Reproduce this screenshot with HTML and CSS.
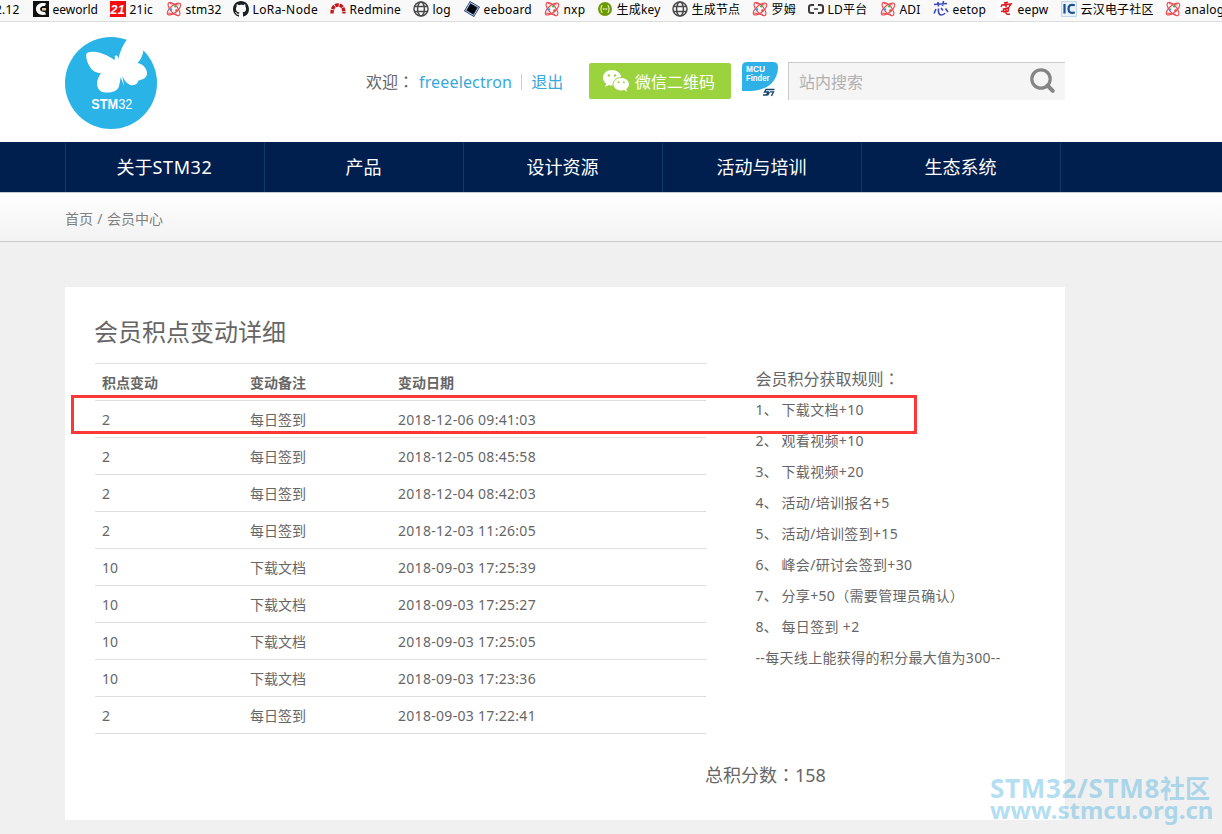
FILE: index.html
```html
<!DOCTYPE html>
<html lang="zh-CN">

<head>
    <meta charset="utf-8">
    <title>会员中心</title>
    <link rel="stylesheet" href="styles.css">
</head>

<body>
    <!-- shared icons -->
    <svg class="defs" width="0" height="0">
        <symbol id="atom" viewBox="0 0 16 16">
            <g fill="none" stroke="#ea4f56" stroke-width="1.2">
                <ellipse cx="8" cy="8" rx="8.200" ry="3.600" transform="rotate(50 8 8)" />
                <ellipse cx="8" cy="8" rx="8.200" ry="3.600" transform="rotate(-40 8 8)" />
                <path d="M4 2.500L12.500 4M2 12L11 13.500" />
            </g>
            <circle cx="5" cy="8.500" r="1.300" fill="#3d9be0" />
            <circle cx="9.300" cy="5.300" r="1.200" fill="#4eb14e" />
            <circle cx="10.500" cy="9.500" r="1.300" fill="#e8454c" />
        </symbol>
        <symbol id="globe" viewBox="0 0 16 16">
            <g fill="none" stroke="#4a4a4a" stroke-width="1.500">
                <circle cx="8" cy="8" r="7" />
                <ellipse cx="8" cy="8" rx="3.400" ry="7" />
                <path d="M1.500 5.500h13M1.500 10.500h13" />
            </g>
        </symbol>
    </svg>

    <div class="bookmarks">
        <span class="bm bm-cut">2.12</span>
        <span class="bm bm-eeworld"><svg viewBox="0 0 16 16"><path d="M0 0h16v16H0z" fill="#111" /><path d="M13 2.500C7 1 3 4 3 8s4 7 10 5.500L12 11c-3 0-5-1-5-3s2-3.500 5-3z" fill="#fff" /><path d="M9 7h4v2.500H9z" fill="#e8c89a" /></svg>eeworld</span>
        <span class="bm bm-21ic"><svg viewBox="0 0 16 16"><path d="M0 0h16v16H0z" fill="#f80b0b" /><text class="ico-21" x="0.500" y="12.500">21</text></svg>21ic</span>
        <span class="bm bm-stm32"><svg><use href="#atom" /></svg>stm32</span>
        <span class="bm bm-lora"><svg viewBox="0 0 16 16"><path fill="#1b1f23" d="M8 0C3.580 0 0 3.580 0 8c0 3.540 2.290 6.530 5.470 7.590.4.070.55-.17.55-.38 0-.19-.01-.82-.01-1.490-2.010.37-2.530-.49-2.690-.94-.09-.23-.48-.94-.82-1.130-.28-.15-.68-.52-.01-.53.63-.01 1.080.58 1.230.82.72 1.210 1.870.87 2.330.66.07-.52.28-.87.51-1.070-1.780-.2-3.640-.89-3.640-3.950 0-.87.31-1.590.82-2.150-.08-.2-.36-1.020.08-2.120 0 0 .67-.21 2.200.82.64-.18 1.320-.27 2-.27s1.360.09 2 .27c1.530-1.040 2.200-.82 2.200-.82.44 1.100.16 1.920.08 2.120.51.56.82 1.270.82 2.150 0 3.070-1.870 3.750-3.650 3.950.29.25.54.73.54 1.480 0 1.070-.01 1.930-.01 2.200 0 .21.15.46.55.38A8.010 8.010 0 0 0 16 8c0-4.420-3.580-8-8-8z" /></svg>LoRa-Node</span>
        <span class="bm bm-redmine"><svg viewBox="0 0 16 16"><path d="M2 12.500C2 6.500 4.500 4 8 4s6 2.500 6 8.500" fill="none" stroke="#c0181c" stroke-width="3.400" stroke-dasharray="3.600 .8" /></svg>Redmine</span>
        <span class="bm bm-log"><svg><use href="#globe" /></svg>log</span>
        <span class="bm bm-eeboard"><svg viewBox="0 0 16 16"><path d="M6 0L16 6L10 16L0 10Z" fill="#14325f" /><path d="M6.300 1.600L14.400 6.400L9.700 14.400L1.600 9.600Z" fill="none" stroke="#c8d8ee" /><path d="M6.800 3.300L12.800 6.800L9.300 12.700L3.300 9.200Z" fill="#000" /></svg>eeboard</span>
        <span class="bm bm-nxp"><svg><use href="#atom" /></svg>nxp</span>
        <span class="bm bm-key"><svg viewBox="0 0 16 16"><circle cx="8" cy="8" r="7" fill="#6d9a00" /><path d="M5.500 4.500Q4.300 4.500 4.300 6Q4.300 8 3.300 8Q4.300 8 4.300 10Q4.300 11.500 5.500 11.500M10.500 4.500Q11.700 4.500 11.700 6Q11.700 8 12.700 8Q11.700 8 11.700 10Q11.700 11.500 10.500 11.500" fill="none" stroke="#e4efc6" stroke-width="1.200" /><path d="M5.800 8h4.400" stroke="#e4efc6" stroke-width="1.300" stroke-dasharray="1.200 .4" /></svg>生成key</span>
        <span class="bm bm-node"><svg><use href="#globe" /></svg>生成节点</span>
        <span class="bm bm-rohm"><svg><use href="#atom" /></svg>罗姆</span>
        <span class="bm bm-ld"><svg viewBox="0 0 16 16"><path d="M6 4H3.500Q1 4 1 6v4Q1 12 3.500 12H6M10 4h2.500Q15 4 15 6v4Q15 12 12.500 12H10" fill="none" stroke="#3c3c3c" stroke-width="2" /><path d="M6 8h4" stroke="#3c3c3c" stroke-width="1.500" /></svg>LD平台</span>
        <span class="bm bm-adi"><svg><use href="#atom" /></svg>ADI</span>
        <span class="bm bm-eetop"><svg viewBox="0 0 16 16"><path d="M1 3.500l13-1M5 1l.5 4.500M10.500 0L9.500 5M3 8L1 12.500M5.500 7.500Q5 14 8 14t4-2M8 7l2 2.500M12.500 7.500l2.500 3.500" fill="none" stroke="#3949b8" stroke-width="1.600" /></svg>eetop</span>
        <span class="bm bm-eepw"><svg viewBox="0 0 16 16"><path d="M0 0h16v16H0z" fill="#fff" /><path d="M6 2l4-.8M3 6L4 4l9-1-2 3M8 1.500V6M5.500 8l5-1.200-.5 3.500-4 .7zM3 10.500l3-.5M8 7v4.500q0 2.500 4 1.500" fill="none" stroke="#e5161c" stroke-width="1.500" /></svg>eepw</span>
        <span class="bm bm-ic"><svg viewBox="0 0 16 16"><path d="M.5.5h15v15H.5z" fill="#e9f1f8" stroke="#c5d5e3" /><path d="M3.500 3v9.500M13.800 4.300Q7.500 2.500 7.500 7.800T13.800 11.500" fill="none" stroke="#164f92" stroke-width="2.200" /></svg>云汉电子社区</span>
        <span class="bm bm-analog"><svg><use href="#atom" /></svg>analog</span>
    </div>

    <div class="header">
        <div class="container header-inner">
            <svg class="logo" viewBox="45 21 276 276">
                <circle cx="183" cy="159" r="138" fill="#29b3e6" />
                <path fill="#fff" d="M109 72C112 64 135 62 158 71C174 77 186 84 193 90L195 84L194 78L199 76L204 80L205 90C207 76 214 52 230 30L238 18H292L280 62C277 80 271 90 262 99C280 101 292 117 291 132C290 145 275 150 266 151C262 166 248 168 239 164C227 158 221 147 217 138L222 168L212 142C210 153 209 163 206 172C199 188 175 190 157 186C143 181 137 163 144 146C146 140 150 134 153 129C140 130 127 123 120 111C112 99 107 84 109 72Z" />
                <text class="logo-text" x="124" y="238" textLength="123" lengthAdjust="spacingAndGlyphs"><tspan class="logo-bold">STM</tspan>32</text>
            </svg>
            <div class="welcome"><span>欢迎<span class="colon" lang="zh-TW">&#65306;</span></span><a class="user">freeelectron</a><i class="bar"></i><a>退出</a></div>
            <a class="wechat">
                <svg viewBox="0 0 28 24">
                    <path fill="#fff" d="M10 1C4.500 1 1 4.500 1 8.700c0 2.500 1.300 4.500 3.200 5.900L3.200 18l3.500-1.900c1.300.4 2.500.5 3.800.5C10.500 11.500 14 8 19.200 8C18.500 4 15 1 10 1Z" />
                    <path fill="#fff" d="M19.200 9C15 9 11.500 11.600 11.500 15.300s3.500 6.300 7.700 6.300c1 0 2-.2 3-.5l2.800 1.600-.8-2.700c1.700-1.200 2.800-2.800 2.800-4.700C27 11.600 23.500 9 19.200 9Z" />
                    <g fill="#9bd33f"><circle cx="6.800" cy="6.500" r="1.200" /><circle cx="13" cy="6.500" r="1.200" /><circle cx="16.500" cy="13.300" r="1" /><circle cx="21.800" cy="13.300" r="1" /></g>
                </svg>
                <span>微信二维码</span>
            </a>
            <svg class="finder" viewBox="0 0 36 35">
                <path fill="#2fb0e6" d="M5 0H31Q36 0 36 5Q36 15 29 22Q20 30 0 29V5Q0 0 5 0Z" />
                <text class="finder-text" x="4" y="10" textLength="19" lengthAdjust="spacingAndGlyphs">MCU</text>
                <text class="finder-text" x="4" y="19.300" textLength="23.500" lengthAdjust="spacingAndGlyphs">Finder</text>
                <path d="M32.500 27.500H24L22.500 30H26L24.500 33H21M27.500 30L25.500 33.500M28 29.800H31.500L29.500 34" fill="none" stroke="#12456f" stroke-width="1.300" />
            </svg>
            <div class="search">
                <span>站内搜索</span>
                <svg viewBox="0 0 26 26"><circle cx="11" cy="11" r="9.200" fill="none" stroke="#858585" stroke-width="3.200" /><path d="M17.500 17.500L22.800 22.800" stroke="#858585" stroke-width="4" stroke-linecap="round" /></svg>
            </div>
        </div>
    </div>

    <div class="nav">
        <div class="container nav-inner">
            <a>关于<span class="latin">STM32</span></a>
            <a>产品</a>
            <a>设计资源</a>
            <a>活动与培训</a>
            <a>生态系统</a>
        </div>
    </div>

    <div class="crumbs">
        <div class="container">首页 / 会员中心</div>
    </div>

    <div class="container card">
        <h1>会员积点变动详细</h1>
        <div class="columns">
            <table class="points">
                <tr><th>积点变动</th><th>变动备注</th><th>变动日期</th></tr>
                <tr><td>2</td><td>每日签到</td><td>2018-12-06 09:41:03</td></tr>
                <tr><td>2</td><td>每日签到</td><td>2018-12-05 08:45:58</td></tr>
                <tr><td>2</td><td>每日签到</td><td>2018-12-04 08:42:03</td></tr>
                <tr><td>2</td><td>每日签到</td><td>2018-12-03 11:26:05</td></tr>
                <tr><td>10</td><td>下载文档</td><td>2018-09-03 17:25:39</td></tr>
                <tr><td>10</td><td>下载文档</td><td>2018-09-03 17:25:27</td></tr>
                <tr><td>10</td><td>下载文档</td><td>2018-09-03 17:25:05</td></tr>
                <tr><td>10</td><td>下载文档</td><td>2018-09-03 17:23:36</td></tr>
                <tr><td>2</td><td>每日签到</td><td>2018-09-03 17:22:41</td></tr>
            </table>
            <div class="rules">
                <h2>会员积分获取规则<span class="colon" lang="zh-TW">&#65306;</span></h2>
                <p><b>1、</b>下载文档+10</p>
                <p><b>2、</b>观看视频+10</p>
                <p><b>3、</b>下载视频+20</p>
                <p><b>4、</b>活动/培训报名+5</p>
                <p><b>5、</b>活动/培训签到+15</p>
                <p><b>6、</b>峰会/研讨会签到+30</p>
                <p><b>7、</b>分享+50&#65288;需要管理员确认&#65289;</p>
                <p><b>8、</b>每日签到 +2</p>
                <p>--每天线上能获得的积分最大值为300--</p>
            </div>
        </div>
        <div class="total">总积分数<span class="colon" lang="zh-TW">&#65306;</span>158</div>
        <div class="marker"></div>
    </div>

    <div class="watermark">
        <div class="wm-name">STM32/STM8<span>社区</span></div>
        <div class="wm-url">www.stmcu.org.cn</div>
    </div>
</body>

</html>
```
FILE: styles.css
```css
html,
body {
    margin: 0;
    padding: 0;
}

body {
    position: relative;
    height: 834px;
    overflow: hidden;
    background-color: #f0f0f0;
    color: #666;
    font-family: "Noto Sans", "Noto Sans CJK SC", sans-serif;
    font-size: 14px;
}

.defs {
    position: absolute;
}

.container {
    width: 1000px;
    margin-left: 65px;
}

/* full-width colon, centred in its cell */
.colon {
    font-family: "Noto Sans CJK TC", sans-serif;
    line-height: 1;
}

/* bookmarks bar */
.bookmarks {
    display: flex;
    height: 21px;
    background-color: #f9f9f9;
    border-bottom: 1px solid #dcdcdc;
    color: #000;
    font-size: 12px;
    line-height: 19px;
    overflow: hidden;
}

.bm {
    display: flex;
    flex: none;
    white-space: nowrap;
    letter-spacing: 0.2px;
}

.bm svg {
    width: 16px;
    height: 16px;
    margin: 1px 3.5px 0 0;
    flex: none;
}

.bm-cut { width: 38px; margin-left: -5px; }
.bm-eeworld { width: 77px; letter-spacing: 0; }
.bm-21ic { width: 56px; }
.bm-stm32 { width: 67px; }
.bm-lora { width: 97px; letter-spacing: 0.4px; }
.bm-redmine { width: 83px; }
.bm-log { width: 51px; }
.bm-eeboard { width: 80px; }
.bm-nxp { width: 53px; }
.bm-key { width: 75px; }
.bm-node { width: 80px; }
.bm-rohm { width: 56px; }
.bm-ld { width: 72px; }
.bm-adi { width: 53px; }
.bm-eetop { width: 65px; }
.bm-eepw { width: 63px; }
.bm-ic { width: 104px; }

.ico-21 {
    fill: #fff;
    font: italic bold 12.5px "Liberation Sans", sans-serif;
}

/* header */
.header {
    height: 120px;
    background-color: #fff;
}

.header-inner {
    display: flex;
    align-items: flex-start;
}

.logo {
    width: 92px;
    height: 92px;
    margin-top: 15px;
}

.logo-text {
    fill: #fff;
    font: 45px "Liberation Sans", sans-serif;
}

.logo-bold {
    font-weight: bold;
}

.welcome {
    display: flex;
    align-items: center;
    width: 223px;
    height: 36px;
    margin: 42px 0 0 209px;
    font-size: 16px;
    line-height: 24px;
    white-space: nowrap;
}

.welcome a {
    color: #39a9dc;
}

.welcome .user {
    margin-left: 5px;
    letter-spacing: 0.15px;
}

.bar {
    width: 1px;
    height: 16px;
    margin: 0 9px;
    background-color: #ccc;
}

.wechat {
    display: flex;
    align-items: center;
    box-sizing: border-box;
    width: 142px;
    height: 36px;
    margin-top: 41px;
    padding-left: 13px;
    border-radius: 2px;
    background-color: #9bd33f;
    color: #fff;
    font-size: 16px;
    white-space: nowrap;
}

.wechat svg {
    width: 28px;
    height: 24px;
    margin-right: 5px;
}

.finder {
    width: 36px;
    height: 35px;
    margin: 40px 10px 0 11px;
}

.finder-text {
    fill: #fff;
    font: bold 9px "Liberation Sans", sans-serif;
}

.search {
    display: flex;
    align-items: center;
    justify-content: space-between;
    box-sizing: border-box;
    width: 277px;
    height: 38px;
    margin-top: 40px;
    padding: 0 9px 1px 10px;
    border-top: 1px solid #ccc;
    border-left: 1px solid #ccc;
    background-color: #f5f5f5;
    color: #b0b0b0;
    font-size: 16px;
}

.search svg {
    width: 26px;
    height: 26px;
}

/* navigation */
.nav {
    height: 50px;
    background-color: #001f4f;
}

.nav-inner {
    display: flex;
}

.nav-inner a {
    box-sizing: border-box;
    width: 199px;
    padding-right: 1px;
    border-left: 1px solid #0c3b69;
    color: #fff;
    font-size: 18px;
    line-height: 50px;
    text-align: center;
}

.nav-inner a:last-child {
    width: 200px;
    border-right: 1px solid #0c3b69;
}

.latin {
    letter-spacing: 0.6px;
}

.crumbs {
    height: 48px;
    border-top: 1px solid #c4c7cf;
    border-bottom: 1px solid #ccc;
    background: linear-gradient(#fff, #f2f2f2);
    color: #808080;
    line-height: 51px;
    word-spacing: 0.7px;
}

/* content */
.card {
    position: relative;
    box-sizing: border-box;
    height: 533px;
    margin-top: 45px;
    padding: 25px 30px 0;
    background-color: #fff;
}

h1 {
    margin: 0 0 11px -1px;
    font-size: 24px;
    font-weight: normal;
    line-height: 40px;
}

.columns {
    display: flex;
    align-items: flex-start;
}

.points {
    width: 611px;
    border-collapse: collapse;
    border-bottom: 1px solid #ddd;
    table-layout: fixed;
}

.points th,
.points td {
    height: 36px;
    padding: 2px 0 0 7px;
    border-top: 1px solid #ddd;
    box-sizing: border-box;
    line-height: 34px;
    text-align: left;
}

.points th:nth-child(-n+2) {
    width: 148px;
}

.points td:last-child {
    letter-spacing: 0.3px;
}

.rules {
    margin: 1px 0 0 49.5px;
    line-height: 31px;
    white-space: nowrap;
}

.rules h2 {
    height: 31px;
    margin: 0;
    font-size: 16px;
    font-weight: normal;
}

.rules p {
    height: 31px;
    margin: 0;
    line-height: 30px;
    letter-spacing: 0.33px;
}

.rules b {
    display: inline-block;
    width: 26px;
    font-weight: normal;
}

.total {
    margin: 26px 0 0 610px;
    font-size: 18px;
    line-height: 30px;
}

/* red frame round the newest record */
.marker {
    position: absolute;
    left: 6px;
    top: 108px;
    width: 840px;
    height: 33px;
    border: 3px solid #fb3838;
}

.watermark {
    position: absolute;
    left: 990px;
    top: 777px;
    color: rgba(56, 168, 220, 0.4);
    font-weight: bold;
    white-space: nowrap;
}

.wm-name {
    font-size: 26px;
    line-height: 22px;
    letter-spacing: 0.7px;
}

.wm-name span {
    font-size: 25px;
    letter-spacing: 0;
}

.wm-url {
    font-size: 24px;
    line-height: 22px;
}
```
